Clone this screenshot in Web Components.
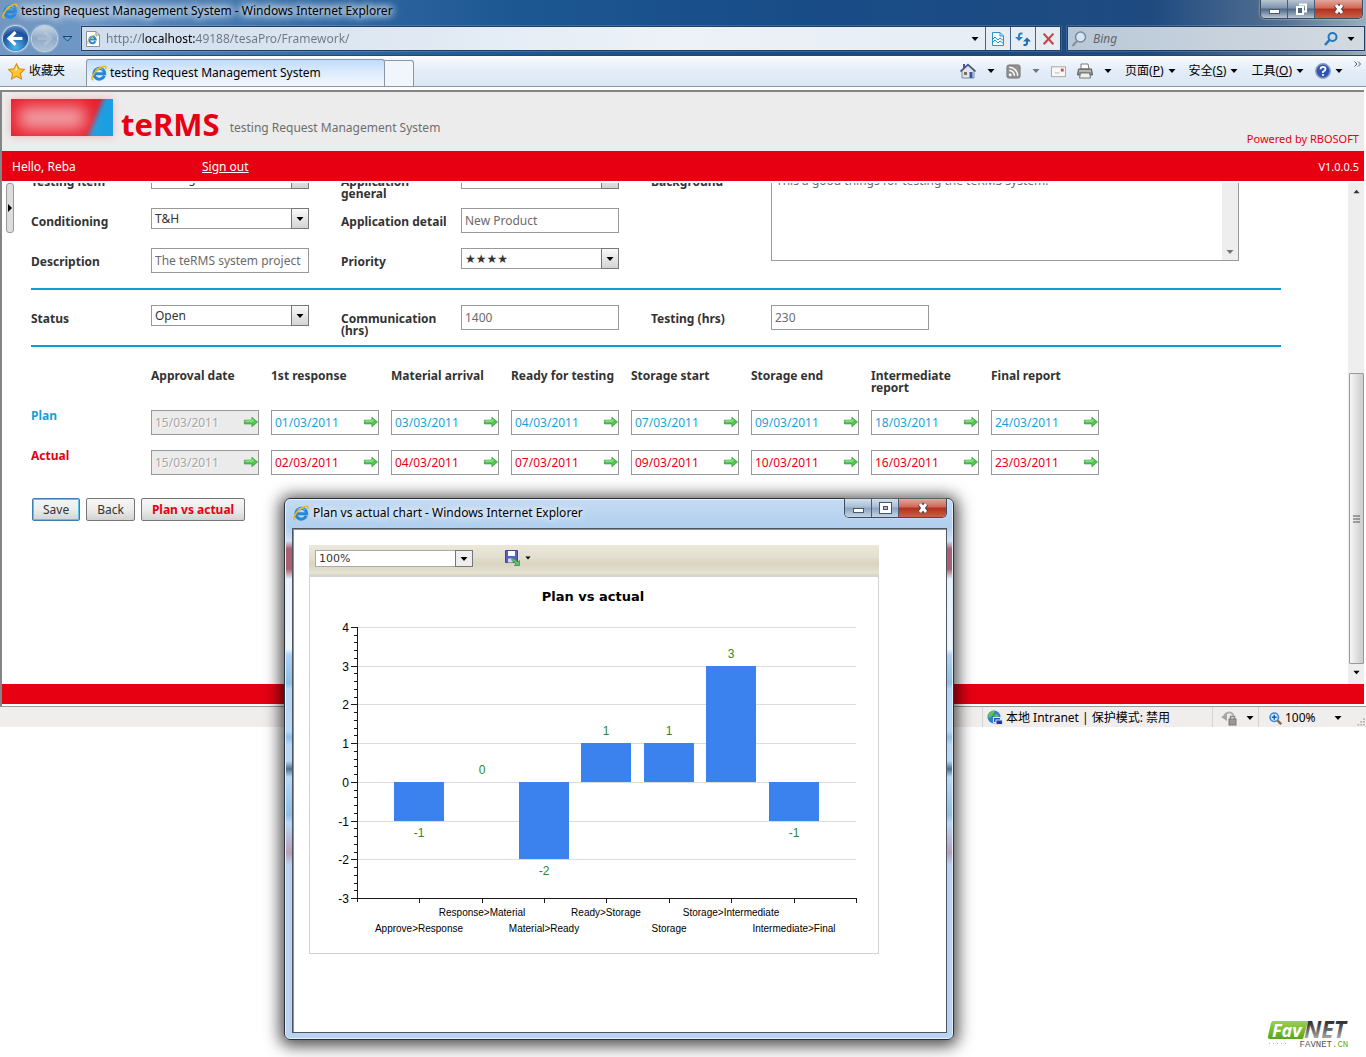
<!doctype html>
<html lang="en">
  <head>
    <meta charset="utf-8">
    <title>testing Request Management System</title>
    <style>
      html, body { margin: 0; }
      body {
        position: relative;
        min-height: 100vh;
        background: #fff;
        color: #000;
        font: 12px/16px "Noto Sans", "Open Sans", "Noto Sans CJK SC", sans-serif;
      }
    </style>
  </head>
  <body>
    <template id="window-buttons">
      <style>
        :host { display: flex; height: 18px; border: 1px solid #3d4d60; border-top: 0; border-radius: 0 0 5px 5px; overflow: hidden; box-shadow: 0 0 2px #dfe8f2; }
        button { display: flex; align-items: center; justify-content: center; width: 27px; padding: 0; border: 0; border-right: 1px solid #4a5c72; background: linear-gradient(var(--glass-top, #d3dfec), var(--glass-mid, #a9bdd4) 45%, var(--glass-low, #8ba3bf) 50%, var(--glass-top, #c3d4e6)); }
        button:last-child { width: 47px; border-right: 0; background: linear-gradient(#e2a79c, #cf6656 45%, #b3301c 50%, #c9604a); }
      </style>
      <button aria-label="Minimize"><svg width="13" height="12"><rect x="1.5" y="6.5" width="10" height="4" fill="#fff" stroke="#4b5868"/></svg></button>
      <button aria-label="Maximize"><slot></slot></button>
      <button aria-label="Close"><svg width="14" height="12"><path d="M4 2L10 10M10 2L4 10" stroke="#4b3a40" stroke-width="5"/><path d="M4 2L10 10M10 2L4 10" stroke="#fff" stroke-width="3"/></svg></button>
    </template>

    <template id="browser-frame">
      <style>
        :host { display: block; background: linear-gradient(90deg, #7197c2 0, #6f97c4 90px, #4f80b6 170px, #2c639f 380px, #1c5792 520px, #184c87 800px, #1e4a80 1150px, #557192 94%, #9badc0); }
        .title { display: flex; align-items: flex-start; height: 22px; padding-right: 3px; }
        .title svg-icon { margin: 3px 3px 0 2px; }
        h1 { flex: 1; margin: 0; font-size: 12px; font-weight: 400; line-height: 22px; text-shadow: 0 0 6px #dce8f5, 0 0 8px #dce8f5, 0 0 8px #dce8f5, 0 0 12px #dce8f5; white-space: nowrap; }
        window-buttons { --glass-top: #b9c6d4; --glass-mid: #7d92aa; --glass-low: #4c6786; }
        nav { display: flex; align-items: center; height: 33px; padding: 0 1px 0 3px; }
        nav button { display: flex; align-items: center; justify-content: center; padding: 0; border: 0; background: none; }
        .round { flex: none; width: 25px; height: 25px; border-radius: 50%; box-shadow: 0 0 2px 1px #dfeaf5; }
        nav .back { background: radial-gradient(circle at 50% 85%, #4bb6ec, #1b4f9c 60%, #8db2da); }
        nav .forward { margin: 0 6px 0 4px; background: linear-gradient(#c9d6e5, #8fa9c6 50%, #b0c3d8); }
        .address, .search { display: flex; align-items: center; box-sizing: border-box; height: 25px; border: 1px solid #1e3f66; box-shadow: 0 0 1px #dce8f5; }
        .address { flex: 1; margin: 0 6px 0 9px; padding-left: 3px; background: linear-gradient(90deg, #cfdded, #edf2f8 60%, #e5ecf4); }
        .address button { width: 25px; height: 23px; box-sizing: border-box; border-left: 1px solid #44658c; }
        .address button:nth-of-type(1) { width: 20px; border: 0; }
        .search { width: 298px; padding: 0 3px; background: linear-gradient(90deg, #b9c8d8, #d3dae1); }
        input { flex: 1; min-width: 0; padding: 0; border: 0; outline: 0; background: none; font: inherit; }
        .address input { margin-left: 5px; color: #6f7680; background: linear-gradient(90deg, #6f7680 37px, #000 37px, #000 90px, #6f7680 90px); background-clip: text; -webkit-background-clip: text; -webkit-text-fill-color: transparent; }
        .search input { margin-left: 6px; font-style: italic; color: #5e666e; }
        .search input::placeholder { color: #5e666e; opacity: 1; }
        .search button { width: 20px; }
        .bar { display: flex; box-sizing: border-box; height: 32px; border-top: 1px solid #27486e; border-bottom: 1px solid #8996a5; background: linear-gradient(#fff, #f4f8fd 10%, #e3edf8 50%, #dce7f4); }
        .favorites { display: flex; align-items: center; gap: 4px; width: 86px; padding: 0 8px; border: 0; background: none; font: inherit; box-sizing: border-box; }
        .tab { display: flex; align-items: center; gap: 3px; width: 299px; margin-top: 3px; padding-left: 4px; border: 1px solid #8996a5; border-bottom: 0; border-radius: 3px 3px 0 0; background: linear-gradient(#c0dbfa, #dfecfc 50%, #f2f7fe); box-sizing: border-box; }
        .newtab { width: 29px; margin-top: 4px; padding: 0; border: 1px solid #8996a5; border-left: 0; border-bottom: 0; border-radius: 0 3px 0 0; background: #f1f6fc; }
        .tools { display: flex; align-items: center; margin-left: auto; padding-right: 4px; }
        .tools button { display: flex; align-items: center; gap: 4px; height: 24px; padding: 0; border: 0; background: none; font: inherit; white-space: nowrap; }
        .tools button + button { margin-left: 11px; }
        .tools button + .menu { margin-left: 13px; }
        .tools .faded { opacity: .5; }
        .tools button:last-child { align-self: flex-start; height: 16px; }
      </style>
      <header class="title">
        <svg-icon name="ie" size="16"></svg-icon>
        <h1>testing Request Management System - Windows Internet Explorer</h1>
        <window-buttons><svg width="12" height="12"><path d="M4 1.500H11V8.500H9" fill="none" stroke="#fff" stroke-width="2"/><rect x="2" y="4" width="6" height="7" fill="#4c6786" stroke="#fff" stroke-width="2"/></svg></window-buttons>
      </header>
      <nav>
        <button class="round back" aria-label="Back"><svg-icon name="back" size="17"></svg-icon></button>
        <button class="round forward" aria-label="Forward"><svg-icon name="forward" size="17"></svg-icon></button>
        <button aria-label="Recent pages"><svg width="9" height="5"><path d="M0 .5H9L4.500 5Z" fill="#63aee8" stroke="#184271"/></svg></button>
        <div class="address">
          <svg-icon name="page" size="16"></svg-icon>
          <input aria-label="Address" value="http://localhost:49188/tesaPro/Framework/">
          <button aria-label="Show addresses"><svg-icon name="down" size="8"></svg-icon></button>
          <button aria-label="Compatibility view"><svg-icon name="compat" size="16"></svg-icon></button>
          <button aria-label="Refresh"><svg-icon name="refresh" size="16"></svg-icon></button>
          <button aria-label="Stop"><svg-icon name="stop" size="13"></svg-icon></button>
        </div>
        <div class="search">
          <svg-icon name="lens" size="16"></svg-icon>
          <input aria-label="Search" placeholder="Bing">
          <button aria-label="Search"><svg-icon name="search" size="16"></svg-icon></button>
          <button aria-label="Search options"><svg-icon name="down" size="8"></svg-icon></button>
        </div>
      </nav>
      <div class="bar">
        <button class="favorites"><svg-icon name="star" size="17"></svg-icon>收藏夹</button>
        <div class="tab"><svg-icon name="ie" size="16"></svg-icon>testing Request Management System</div>
        <button class="newtab" aria-label="New tab"></button>
        <div class="tools">
          <button aria-label="Home"><svg-icon name="home" size="16"></svg-icon></button>
          <button aria-label="Home options"><svg-icon name="down" size="8"></svg-icon></button>
          <button aria-label="Feeds"><svg-icon name="feed" size="15"></svg-icon></button>
          <button class="faded" aria-label="Feed options"><svg-icon name="down" size="8"></svg-icon></button>
          <button aria-label="Mail"><svg-icon name="mail" size="15"></svg-icon></button>
          <button aria-label="Print"><svg-icon name="print" size="16"></svg-icon></button>
          <button aria-label="Print options"><svg-icon name="down" size="8"></svg-icon></button>
          <button class="menu"><span>页面(<u>P</u>)</span><svg-icon name="down" size="8"></svg-icon></button>
          <button class="menu"><span>安全(<u>S</u>)</span><svg-icon name="down" size="8"></svg-icon></button>
          <button class="menu"><span>工具(<u>O</u>)</span><svg-icon name="down" size="8"></svg-icon></button>
          <button aria-label="Help"><svg-icon name="help" size="16"></svg-icon><svg-icon name="down" size="8"></svg-icon></button>
          <button aria-label="More"><svg-icon name="more" size="8"></svg-icon></button>
        </div>
      </div>
    </template>

    <template id="app-header">
      <style>
        :host { display: block; border-top: 2px solid #858585; color: #e60012; }
        .brand { display: flex; align-items: flex-end; height: 59px; background: #ececec; }
        .logo { align-self: flex-start; width: 102px; height: 37px; margin: 7px 8px 0 9px; box-shadow: 0 0 8px #f2b0b5; }
        h2 { margin: 0 10px 7px 0; font-size: 31px; line-height: 40px; }
        .sub { flex: 1; margin-bottom: 15px; color: #6e6e6e; }
        .powered { margin: 0 5px 4px; font-size: 11px; }
        .user { display: flex; align-items: center; box-sizing: border-box; height: 30px; padding: 2px 5px 0 10px; background: #e60012; color: #fff; }
        .user span { width: 190px; }
        .user a { flex: 1; color: inherit; }
        small { font-size: 11px; }
      </style>
      <div class="brand">
        <svg class="logo" viewBox="0 0 102 37" aria-hidden="true">
          <filter id="soft" x="-30%" y="-80%" width="160%" height="260%"><feGaussianBlur stdDeviation="8"/></filter>
          <filter id="edge"><feGaussianBlur stdDeviation="2"/></filter>
          <rect width="102" height="37" fill="#e8202f"/>
          <path d="M95 -6H112V43H75Z" fill="#1a9fe0" filter="url(#edge)"/>
          <rect x="8" y="8" width="66" height="22" fill="#f2a3a8" filter="url(#soft)"/>
        </svg>
        <h2>teRMS</h2>
        <span class="sub">testing Request Management System</span>
        <span class="powered">Powered by RBOSOFT</span>
      </div>
      <div class="user"><span>Hello, Reba</span><a href="#">Sign out</a><small>V1.0.0.5</small></div>
    </template>

    <template id="form-field">
      <style>
        :host { display: grid; grid-template-columns: 120px 158px; align-items: start; height: 40px; }
        :host([type="area"]) { grid-template-columns: 120px 468px; grid-row: span 3; height: auto; }
        label { padding: 8px 6px 0 0; color: #333; font-weight: 700; line-height: 12px; }
        input, select, textarea { box-sizing: border-box; width: 100%; margin: 0; padding: 0 3px; border: 1px solid #999; border-radius: 0; background: #fff; color: #6b6b6b; font: inherit; outline: 0; }
        input { height: 25px; }
        select { grid-area: 1 / 1; height: 21px; appearance: none; color: #333; }
        :host([value^="★"]) select { font-family: "DejaVu Sans", sans-serif; }
        .drop { display: grid; }
        .drop span { grid-area: 1 / 1; display: flex; align-items: center; justify-content: center; justify-self: end; box-sizing: border-box; width: 18px; height: 21px; border: 1px solid #777; background: linear-gradient(#fafafa, #d4d4d4); pointer-events: none; }
        .area { display: flex; height: 93px; box-sizing: border-box; border: 1px solid #999; }
        .area textarea { flex: 1; height: auto; padding: 4px 4px; border: 0; resize: none; overflow: hidden; }
        .area span { display: flex; align-items: flex-end; justify-content: center; width: 16px; padding-bottom: 4px; background: #eee; }
        .area svg-icon { opacity: .5; }
      </style>
    </template>

    <template id="date-table">
      <style>
        :host { display: block; padding-top: 15px; }
        table { width: 1080px; border-collapse: collapse; table-layout: fixed; }
        th, td { height: 40px; padding: 0; text-align: left; vertical-align: top; }
        th { box-sizing: border-box; padding-top: 8px; color: #333; line-height: 12px; }
        .plan { --ink: #1a9fd6; }
        .actual { --ink: #e60012; }
        tbody th { color: var(--ink); }
        .date { display: flex; align-items: center; box-sizing: border-box; width: 108px; height: 25px; margin-top: 8px; border: 1px solid #999; background: #fff; }
        .date input { flex: 1; min-width: 0; padding: 0 3px; border: 0; outline: 0; background: none; color: var(--ink); font: inherit; }
        .date.off { background: #ebebeb; }
        .date.off input { color: #a5a5a5; text-shadow: 1px 1px #fff; }
        .date button { display: flex; padding: 0; border: 0; background: none; }
      </style>
      <table><thead></thead><tbody></tbody></table>
    </template>

    <template id="request-form">
      <style>
        :host { display: flex; flex: 1; min-height: 0; padding-top: 2px; box-sizing: border-box; background: #fff; }
        .splitter { align-self: flex-start; display: flex; align-items: center; justify-content: center; flex: none; box-sizing: border-box; width: 8px; height: 50px; margin: 0 17px 0 4px; padding: 0; border: 1px solid #999; border-radius: 3px; background: #ddd; }
        form { flex: 1; min-width: 0; overflow: hidden; }
        .fields { display: grid; grid-template-columns: 310px 310px 1fr; margin-right: 67px; border-bottom: 2px solid #0d9cd8; }
        .scrolled { margin-top: -15px; }
        .status { padding-top: 15px; }
        .actions { display: flex; gap: 6px; padding: 16px 1px; }
        .actions button { height: 23px; padding: 0 10px; border: 1px solid #777; border-radius: 2px; background: linear-gradient(#f6f6f6, #ececec 50%, #d2d2d2); color: #333; font: inherit; }
        .actions .default { border-color: #3c7fb1; box-shadow: inset 0 0 0 1px #57c5ee; }
        .actions .chart { color: #e60012; font-weight: 700; }
        .scroll { display: flex; flex-direction: column; align-items: center; flex: none; width: 16px; background: #eee; }
        .scroll svg-icon { padding: 5px 0 8px; }
        .scroll .gap { flex: 171; }
        .thumb { display: flex; align-items: center; justify-content: center; flex: 290; box-sizing: border-box; width: 15px; border: 1px solid #999; border-radius: 1px; background: linear-gradient(90deg, #f7f7f7, #e0e0e0 50%, #ccc); }
      </style>
      <button class="splitter" aria-label="Show panel"><svg width="4" height="8"><path d="M0 0L4 4L0 8Z"/></svg></button>
      <form>
        <div class="fields scrolled">
          <form-field type="select" label="Testing item" value="Testing"></form-field>
          <form-field type="select" label="Application general" value=" "></form-field>
          <form-field type="area" label="Background" value="This a good things for testing the teRMS system."></form-field>
          <form-field type="select" label="Conditioning" value="T&amp;H"></form-field>
          <form-field label="Application detail" value="New Product"></form-field>
          <form-field label="Description" value="The teRMS system project"></form-field>
          <form-field type="select" label="Priority" value="★★★★"></form-field>
        </div>
        <div class="fields status">
          <form-field type="select" label="Status" value="Open"></form-field>
          <form-field label="Communication (hrs)" value="1400"></form-field>
          <form-field label="Testing (hrs)" value="230"></form-field>
        </div>
        <date-table></date-table>
        <div class="actions">
          <button type="button" class="default">Save</button>
          <button type="button">Back</button>
          <button type="button" class="chart">Plan vs actual</button>
        </div>
      </form>
      <div class="scroll" aria-hidden="true">
        <svg-icon name="up" size="7"></svg-icon>
        <div class="gap"></div>
        <div class="thumb"><svg width="7" height="8"><path d="M0 1H7M0 4H7M0 7H7" stroke="#555"/></svg></div>
        <svg-icon name="down" size="7"></svg-icon>
      </div>
    </template>

    <template id="status-bar">
      <style>
        :host { display: flex; align-items: stretch; justify-content: flex-end; height: 21px; box-sizing: border-box; border-top: 1px solid #999; background: #f0eded; }
        div { display: flex; align-items: center; gap: 4px; box-sizing: border-box; padding: 2px 8px 0; border-left: 1px solid #d8d3d3; }
        .zone { width: 230px; padding-left: 4px; gap: 3px; }
        .lock { width: 46px; gap: 9px; }
        .zoom { width: 108px; padding-left: 10px; padding-right: 0; gap: 3px; }
        .zoom svg-icon[name="down"] { margin: 0 12px 0 auto; }
        .zoom svg-icon[name="grip"] { align-self: flex-end; }
      </style>
      <div class="zone"><svg-icon name="globe" size="16"></svg-icon>本地 Intranet | 保护模式: 禁用</div>
      <div class="lock"><svg-icon name="lock" size="16"></svg-icon><svg-icon name="down" size="8"></svg-icon></div>
      <div class="zoom"><svg-icon name="zoom" size="13"></svg-icon>100%<svg-icon name="down" size="8"></svg-icon><svg-icon name="grip" size="9"></svg-icon></div>
    </template>

    <template id="bar-chart">
      <style>
        :host { display: block; }
        svg { display: block; width: 100%; height: auto; font-family: "Liberation Sans", Arial, sans-serif; }
        .heading { font: 700 13px Verdana, "DejaVu Sans", sans-serif; }
        .scale { font-size: 12px; }
        .value { font-size: 12px; fill: #2b8a2b; }
        .name { font-size: 10px; }
        .grid { stroke: #dcdcdc; }
        .axis { stroke: #1a1a1a; fill: none; }
        rect { fill: #3b82ee; }
      </style>
      <svg viewBox="0 0 568 376" role="img" aria-label="Plan vs actual"></svg>
    </template>

    <template id="popup-window">
      <style>
        :host {
          box-sizing: border-box;
          display: flex;
          flex-direction: column;
          padding: 0 6px 6px 7px;
          border: 1px solid #2b3238;
          border-radius: 6px;
          background: linear-gradient(#c5dbf3 0, #b1cfef 28px, #cfe2f6 42px, #a9606f 50px, #a9606f 70px, #e6f1fb 80px, #edf5fc 150px, #aed2f7 156px, #8fbfe6 184px, #b6d6f7 190px, #b9d8f8 232px, #8fbfe6 238px, #b9d8f8 246px, #b9d8f8 262px, #52708c 270px, #b9d8f8 278px, #8fbfe6 316px, #b9d8f8 324px, #b99fb9 354px, #b9d3f1 366px);
          box-shadow: inset 0 0 0 1px #e4f0fb, 0 2px 16px 4px rgba(0, 0, 0, .7);
        }
        header { display: flex; align-items: flex-start; height: 29px; }
        header svg-icon { margin: 6px 4px 0 1px; }
        h2 { flex: 1; margin: 0; font-size: 12px; font-weight: 400; line-height: 28px; text-shadow: 0 0 6px #fff, 0 0 8px #fff; }
        main { flex: 1; padding: 16px; border: 1px solid #4d5660; box-shadow: inset 1px 1px #909090; background: #fff; }
        .report { width: 570px; }
        .tools { display: flex; align-items: flex-start; height: 31px; padding: 5px 6px 0; box-sizing: border-box; background: linear-gradient(#ece8da, #e3dfcf 40%, #d8d4c0 60%, #e6e3d5 90%, #d5d1c0); }
        .drop { display: grid; width: 158px; margin-right: 32px; }
        select { grid-area: 1 / 1; height: 17px; margin: 0; padding: 0 3px; border: 1px solid #aaa; border-radius: 0; background: #fff; appearance: none; color: #333; font: 11px "DejaVu Sans", Verdana, sans-serif; }
        .drop span { grid-area: 1 / 1; display: flex; align-items: center; justify-content: center; justify-self: end; box-sizing: border-box; width: 18px; height: 17px; border: 1px solid #777; background: #eee; pointer-events: none; }
        .tools button { display: flex; align-items: center; gap: 4px; padding: 0; border: 0; background: none; }
        .body { border: 1px solid #d3d3d3; }
      </style>
      <header>
        <svg-icon name="ie" size="16"></svg-icon>
        <h2><slot name="title"></slot></h2>
        <window-buttons><svg width="13" height="12"><rect x="2" y="2" width="9" height="8" fill="none" stroke="#46566a" stroke-width="4"/><rect x="2" y="2" width="9" height="8" fill="#fff" stroke="#fff" stroke-width="2"/><rect x="4.500" y="4.500" width="4" height="3" fill="#a9bdd4" stroke="#46566a"/></svg></window-buttons>
      </header>
      <main>
        <div class="report">
          <div class="tools">
            <div class="drop">
              <select aria-label="Zoom"><option>100%</option></select>
              <span><svg-icon name="down" size="8"></svg-icon></span>
            </div>
            <button aria-label="Export"><svg-icon name="save" size="16"></svg-icon><svg-icon name="down" size="6"></svg-icon></button>
          </div>
          <div class="body"><slot></slot></div>
        </div>
      </main>
    </template>

    <template id="site-mark">
      <style>
        :host { display: block; }
        svg { display: block; font-family: "Open Sans", "Noto Sans", sans-serif; }
      </style>
      <svg width="90" height="40" role="img" aria-label="FavNET">
        <defs>
          <linearGradient id="g" x2="0" y2="1"><stop stop-color="#9bd14f"/><stop offset="1" stop-color="#58a618"/></linearGradient>
          <linearGradient id="n" x2="0" y2="1"><stop offset=".3" stop-color="#333"/><stop offset=".8" stop-color="#aaa"/></linearGradient>
        </defs>
        <path d="M6 9H41L36 27H3Q0 27 1 24L4 11Q5 9 6 9Z" fill="url(#g)"/>
        <text x="5" y="25" font-size="18" font-weight="700" font-style="italic" fill="#fff">Fav</text>
        <text x="37" y="26" font-size="23" font-weight="700" font-style="italic" fill="url(#n)">NET</text>
        <path d="M2 31.500H20" stroke="#b5b5b5" stroke-dasharray="1 3"/>
        <text x="65" y="35" text-anchor="end" font-family="Liberation Mono, monospace" font-size="9" fill="#555">FAVNET</text>
        <text x="65" y="35" font-family="Liberation Mono, monospace" font-size="9" fill="#6ab023">.CN</text>
      </svg>
    </template>

    <template id="request-app">
      <style>
        :host { display: flex; flex-direction: column; }
        .page { display: flex; flex-direction: column; height: 616px; margin-right: 2px; border-left: 2px solid #858585; }
        .gap { height: 3px; background: #fff; }
        .foot { height: 20px; margin-bottom: 2px; background: #e60012; }
      </style>
      <browser-frame></browser-frame>
      <div class="gap"></div>
      <div class="page">
        <app-header></app-header>
        <request-form></request-form>
        <div class="foot"></div>
      </div>
      <status-bar></status-bar>
      <slot></slot>
    </template>

    <script>
      const ICONS = {
        ie: '<path d="M13.300 10.800A5.400 5.400 0 1 1 13.700 8.700H4" fill="none" stroke="#2389d8" stroke-width="3"/><path d="M4 5.500A5 5 0 0 1 12 5" fill="none" stroke="#7ed0f7"/><path d="M2.500 14.700C-1 15.500 1.500 8 8 3.500C12.500 .4 15.800 .3 14.800 4" fill="none" stroke="#f2b51c" stroke-width="1.600"/>',
        page: '<path d="M1.500 .5H11L14.500 4V15.500H1.500Z" fill="#fff" stroke="#8a94a0"/><path d="M11 .5V4H14.500" fill="none" stroke="#8a94a0"/><path d="M10.500 10.300A3.300 3.300 0 1 1 10.800 8.600H4.500" fill="none" stroke="#2389d8" stroke-width="2"/><path d="M3.500 12.500C1 12.500 4 7 8 4.800C10.500 3.600 12 4 11.300 5.800" fill="none" stroke="#f2b51c"/>',
        back: '<path d="M8 2L2 8L8 14M2.500 8H14.500" fill="none" stroke="#fff" stroke-width="3"/>',
        forward: '<path d="M8 2L14 8L8 14M13.500 8H1.500" fill="none" stroke="#d5dfea" stroke-width="3" opacity=".3"/>',
        down: '<path d="M1 4H15L8 12Z" fill="#000"/>',
        up: '<path d="M1 12H15L8 4Z" fill="#333"/>',
        compat: '<path d="M2.500 1.500H10L13.500 5V14.500H2.500Z" fill="#f3f9fe" stroke="#2c93cf"/><path d="M10 1.500V5H13.500" fill="none" stroke="#2c93cf"/><path d="M2 9L5 6L8 9L10 7L14 10M2 12L5 9L8 12L10 10L14 13" fill="none" stroke="#2c93cf"/>',
        refresh: '<path d="M7.500 2.500H6Q4 2.500 4 5V7" fill="none" stroke="#2a7fc8" stroke-width="2"/><path d="M0 6H8L4 10Z" fill="#2a7fc8"/><path d="M8.500 14H10Q12 14 12 11.500V9.500" fill="none" stroke="#1f6bb5" stroke-width="2"/><path d="M8 10.500H16L12 6.500Z" fill="#1f6bb5"/>',
        stop: '<path d="M2 2L14 15M14 2L2 15" stroke="#cf3f48" stroke-width="2.600"/>',
        lens: '<circle cx="9.500" cy="6" r="5" fill="#d8e6f4" stroke="#7788a0" stroke-width="1.500"/><path d="M6 10L1.500 15" stroke="#8a8f98" stroke-width="2.200"/>',
        search: '<circle cx="9.500" cy="6" r="4" fill="none" stroke="#2376c2" stroke-width="2"/><path d="M6.500 9L2 14" stroke="#2376c2" stroke-width="2.600"/>',
        star: '<path d="M8 .8L10.300 5.500L15.500 6.200L11.700 9.800L12.700 15L8 12.500L3.300 15L4.300 9.800L.5 6.200L5.700 5.500Z" fill="#fbc531" stroke="#d98a15"/><path d="M8 2.500L9 6.300L6 8Z" fill="#fff2a8"/>',
        home: '<path d="M2 8V15H14V8L8 2.500Z" fill="#dfe5ee" stroke="#7b8799"/><path d="M3 1V5H5V1Z" fill="#4157b0"/><path d="M.5 8.500L8 1.500L15.500 8.500" fill="none" stroke="#4a5680" stroke-width="1.600"/><rect x="9.500" y="9" width="3" height="6" fill="#34589f"/><rect x="4" y="9" width="3" height="3" fill="#7d6e55"/>',
        feed: '<rect x="1" y="1" width="14" height="14" rx="2" fill="#919191" stroke="#757575"/><circle cx="4.500" cy="11.500" r="1.500" fill="#fff"/><path d="M3.500 7A5.500 5.500 0 0 1 9 12.500M3.500 3.500A9 9 0 0 1 12.500 12.500" fill="none" stroke="#fff" stroke-width="1.600"/>',
        mail: '<rect x=".5" y="3" width="15" height="10.500" fill="#f7f7f7" stroke="#a9a39e"/><rect x="10.500" y="5" width="3" height="3" fill="#d3493c"/><path d="M4 9.500H9" stroke="#b5b5b5"/>',
        print: '<path d="M4 1H11L12 6H4Z" fill="#fff" stroke="#777"/><path d="M1.500 6H14.500L15.500 12H.5Z" fill="#8c8c8c" stroke="#5c5c5c"/><path d="M3.500 10H12.500L13.500 15H2.500Z" fill="#eef3ea" stroke="#777"/><path d="M2 8H14" stroke="#ddd"/>',
        help: '<circle cx="8" cy="8" r="7.200" fill="#2f55b5" stroke="#8f9bb5" stroke-width="1.500"/><path d="M5.500 6.300Q5.500 3.800 8 3.800T10.500 6Q10.500 7.500 8 8.700V10" fill="none" stroke="#fff" stroke-width="1.800"/><circle cx="8" cy="12" r="1.100" fill="#fff"/>',
        more: '<path d="M1 3L6 8L1 13M8 3L13 8L8 13" fill="none" stroke="#46567a" stroke-width="2"/>',
        arrow: '<path d="M1.500 5.500H9.500V2.500L15.500 7.500L9.500 12.500V9.500H1.500Z" fill="#4fc84d" stroke="#3a9a3e" stroke-width=".8"/><path d="M2.500 6.500H10.500V4.500" fill="none" stroke="#b5efae"/>',
        globe: '<circle cx="7" cy="7" r="6.500" fill="#2d80cf"/><path d="M2 3Q5 0 8 1L6 5L3 8L1 7ZM8 4L12 5L10 9L7 8Z" fill="#5fc153"/><rect x="6.500" y="7.500" width="7" height="5" fill="#2b4fc2" stroke="#dfe5f3"/><rect x="9" y="10" width="6.500" height="4.500" fill="#2038a5" stroke="#dfe5f3"/>',
        lock: '<path d="M3 7A5 5 0 0 1 12.500 5.500" fill="none" stroke="#b0b0b0" stroke-width="2"/><path d="M0 7L6 4V11Z" fill="#a5a5a5"/><rect x="8" y="9" width="7" height="6" fill="#999" stroke="#777"/><path d="M9.500 9V6.500H13.500V9" fill="none" stroke="#888" stroke-width="1.500"/>',
        zoom: '<circle cx="6.500" cy="6.500" r="5.200" fill="#d9ecfb" stroke="#3e88cf" stroke-width="2"/><path d="M3.500 6.500H9.500M6.500 3.500V9.500" stroke="#1c5fb0" stroke-width="1.800"/><path d="M10.500 10.500L15 15" stroke="#8a6b4b" stroke-width="3"/>',
        grip: '<path d="M11 2H14M6 7H9M11 7H14M1 12H4M6 12H9M11 12H14" stroke="#b5b0b0" stroke-width="3"/>',
        save: '<path d="M.5 .5H12.500V12.500H.5Z" fill="#5561c4" stroke="#3e4899"/><rect x="3" y="1" width="7" height="5" fill="#fff"/><rect x="3" y="8.500" width="5" height="4" fill="#d5d9ee"/><path d="M8 8L13 12L14.500 10.500V15.500H9.500L11 14L6.500 10Z" fill="#63c267" stroke="#35833b" stroke-width=".7"/>'
      };

      const STAGES = [
        ['Approval date', '15/03/2011', '15/03/2011'],
        ['1st response', '01/03/2011', '02/03/2011'],
        ['Material arrival', '03/03/2011', '04/03/2011'],
        ['Ready for testing', '04/03/2011', '07/03/2011'],
        ['Storage start', '07/03/2011', '09/03/2011'],
        ['Storage end', '09/03/2011', '10/03/2011'],
        ['Intermediate report', '18/03/2011', '16/03/2011'],
        ['Final report', '24/03/2011', '23/03/2011']
      ];

      const DELTAS = [
        ['Approve>Response', -1],
        ['Response>Material', 0],
        ['Material>Ready', -2],
        ['Ready>Storage', 1],
        ['Storage', 1],
        ['Storage>Intermediate', 3],
        ['Intermediate>Final', -1]
      ];

      class TemplateElement extends HTMLElement {
        constructor(templateId) {
          super();
          const root = this.attachShadow({mode: 'open'});
          const t = document.querySelector('template#' + templateId);
          root.appendChild(t.content.cloneNode(true));
        }
      }

      customElements.define('svg-icon', class extends HTMLElement {
        constructor() {
          super();
          this.attachShadow({mode: 'open'});
        }
        connectedCallback() {
          const size = this.getAttribute('size');
          this.shadowRoot.innerHTML = `
            <style>:host { display: inline-block; flex: none; } svg { display: block; }</style>
            <svg width="${size}" height="${size}" viewBox="0 0 16 16" aria-hidden="true">${ICONS[this.getAttribute('name')]}</svg>`;
        }
      });

      customElements.define('form-field', class extends TemplateElement {
        constructor() {
          super('form-field');
        }
        connectedCallback() {
          const type = this.getAttribute('type');
          const value = this.getAttribute('value');
          const label = document.createElement('label');
          label.htmlFor = 'control';
          label.textContent = this.getAttribute('label');
          const box = document.createElement('div');
          if (type === 'select') {
            box.className = 'drop';
            box.innerHTML = '<select id="control"><option></option></select><span><svg-icon name="down" size="8"></svg-icon></span>';
            box.querySelector('option').textContent = value;
          } else if (type === 'area') {
            box.className = 'area';
            box.innerHTML = '<textarea id="control"></textarea><span><svg-icon name="down" size="8"></svg-icon></span>';
            box.querySelector('textarea').value = value;
          } else {
            box.innerHTML = '<input id="control">';
            box.querySelector('input').value = value;
          }
          this.shadowRoot.append(label, box);
        }
      });

      customElements.define('date-table', class extends TemplateElement {
        constructor() {
          super('date-table');
          const cell = (s, i, name) => `<td><div class="date${i ? '' : ' off'}">
            <input aria-label="${name} ${s[0]}" value="${s[name === 'Plan' ? 1 : 2]}"${i ? '' : ' readonly'}>
            <button type="button" aria-label="Pick date"><svg-icon name="arrow" size="15"></svg-icon></button></div></td>`;
          this.shadowRoot.querySelector('thead').innerHTML =
            '<tr><td></td>' + STAGES.map(s => `<th scope="col">${s[0]}</th>`).join('') + '</tr>';
          this.shadowRoot.querySelector('tbody').innerHTML = ['Plan', 'Actual'].map(name =>
            `<tr class="${name.toLowerCase()}"><th scope="row">${name}</th>${STAGES.map((s, i) => cell(s, i, name)).join('')}</tr>`
          ).join('');
        }
      });

      customElements.define('bar-chart', class extends TemplateElement {
        constructor() {
          super('bar-chart');
          const left = 47, right = 546, top = 50, bottom = 321;
          const y = v => Math.round(top + (4 - v) * (bottom - top) / 7);
          const x = i => Math.round(right - (8 - i) * 62.4);
          let out = '<text class="heading" x="283" y="24" text-anchor="middle">Plan vs actual</text>';
          for (let v = -3; v <= 4; v++) {
            if (v > -3) out += `<path class="grid" d="M${left} ${y(v) + .5}H${right}"/>`;
            out += `<path class="axis" d="M${left - 6} ${y(v) + .5}h6"/>`;
            out += `<text class="scale" x="${left - 8}" y="${y(v) + 5}" text-anchor="end">${v}</text>`;
            for (let m = 1; m < 5 && v < 4; m++) {
              out += `<path class="axis" d="M${left - 3} ${y(v + m / 5) + .5}h3"/>`;
            }
          }
          DELTAS.forEach(([name, v], i) => {
            const cx = x(i + 1);
            const h = Math.abs(y(v) - y(0));
            out += `<rect x="${cx - 25}" y="${Math.min(y(v), y(0))}" width="50" height="${h}"/>`;
            out += `<text class="value" x="${cx}" y="${v < 0 ? y(v) + 16 : y(v) - 8}" text-anchor="middle">${v}</text>`;
            out += `<text class="name" x="${cx}" y="${i % 2 ? 339 : 355}" text-anchor="middle">${name.replace('>', '&gt;')}</text>`;
          });
          out += `<path class="axis" d="M${left + .5} ${top}V${bottom + 4}M${left} ${bottom + .5}H${right + 1}"/>`;
          for (let i = 1; i <= 8; i++) out += `<path class="axis" d="M${x(i) + .5} ${bottom}v5"/>`;
          this.shadowRoot.querySelector('svg').innerHTML = out;
        }
      });

      for (const name of ['window-buttons', 'browser-frame', 'app-header', 'request-form',
                          'status-bar', 'popup-window', 'site-mark', 'request-app']) {
        customElements.define(name, class extends TemplateElement {
          constructor() {
            super(name);
          }
        });
      }
    </script>

    <style>
      popup-window { position: absolute; left: 284px; top: 498px; width: 670px; height: 542px; }
      site-mark { position: absolute; right: 9px; bottom: 5px; }
    </style>
    <request-app>
      <popup-window>
        <span slot="title">Plan vs actual chart - Windows Internet Explorer</span>
        <bar-chart></bar-chart>
      </popup-window>
      <site-mark></site-mark>
    </request-app>
  </body>
</html>
